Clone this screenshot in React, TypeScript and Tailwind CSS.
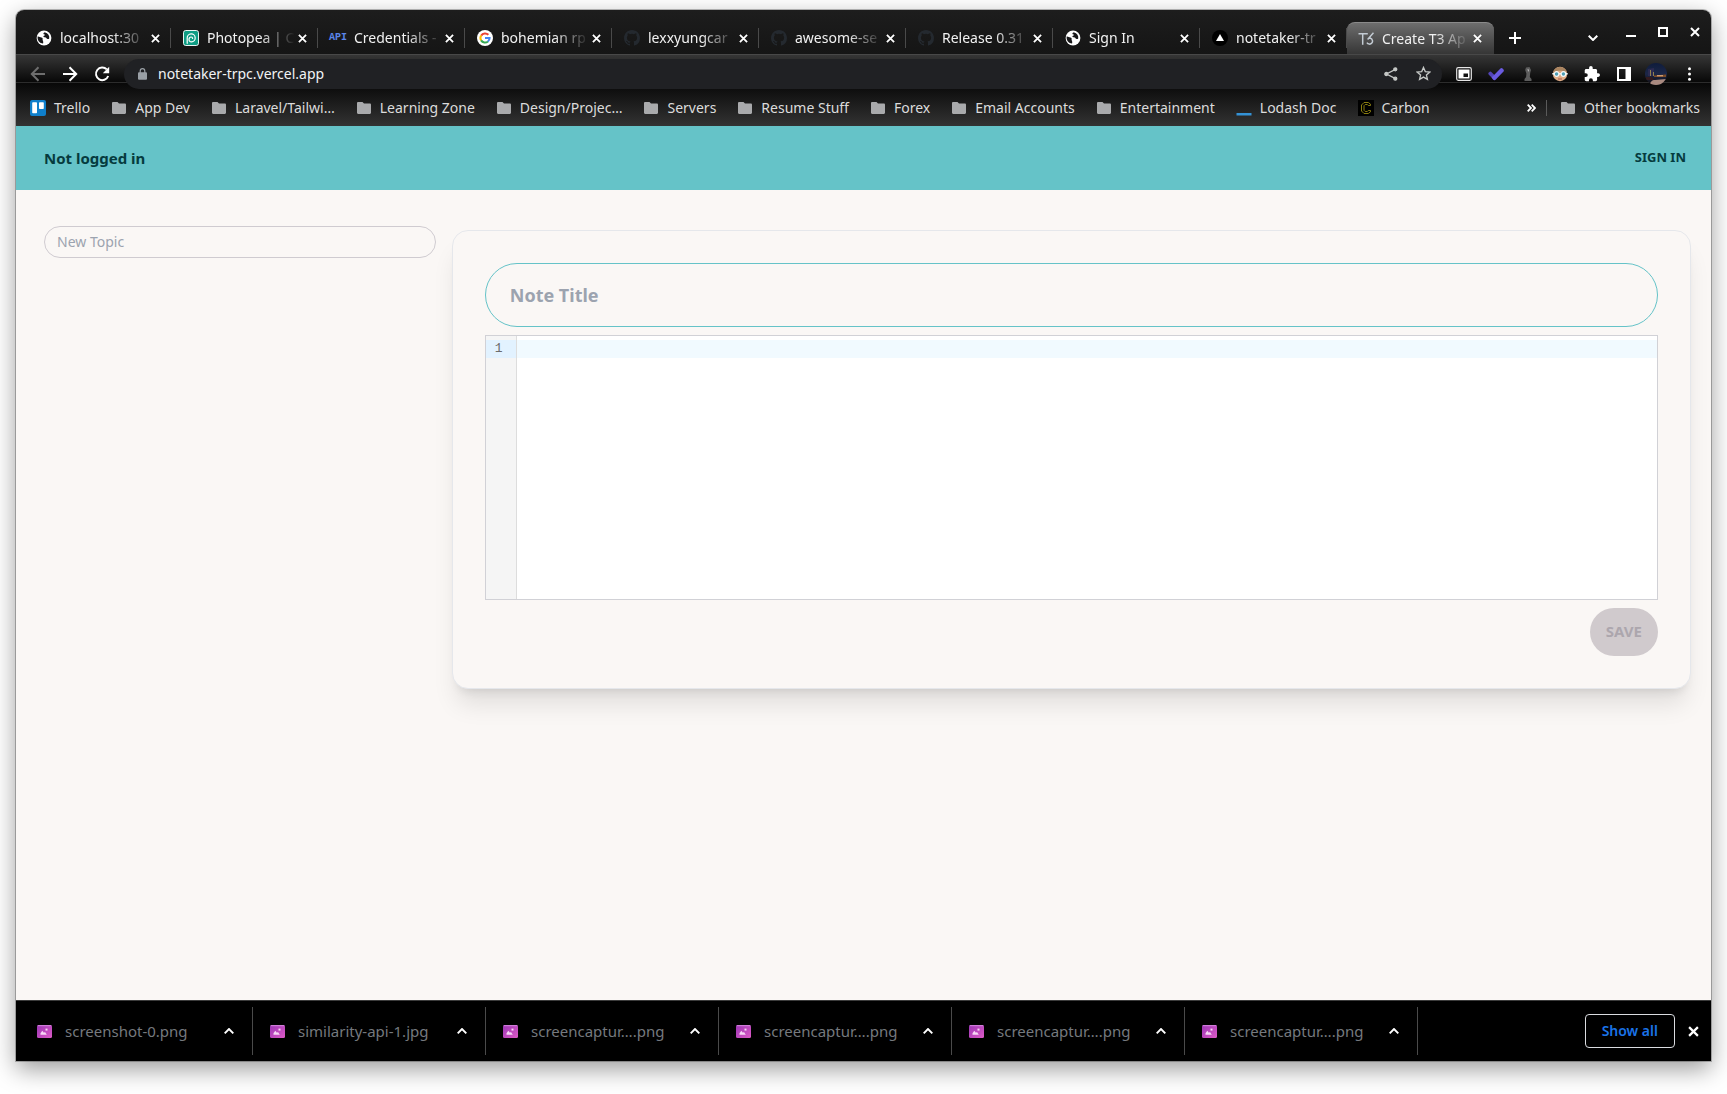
import type { ReactNode } from "react";

const sans = "font-['Noto_Sans',sans-serif]";

/* ---------- icons ---------- */

function Globe() {
  return (
    <svg className="size-4 shrink-0" viewBox="0 0 16 16" aria-hidden="true">
      <circle cx="8" cy="8" r="7.4" fill="#fff" />
      <path d="M1.6 6.6C3 6.2 4 7.4 5.4 7.6c1.200.2 1.500 1 1.200 1.900-.2.7.4 1 .5 1.700.1.9.3 1.600-.1 2.400C4 13.200 1.700 10.800 1.600 8z" fill="#18181a" />
      <path d="M8.700 2.200c-.9.5-1.500 1.200-1.200 1.900.3.5 1.200.2 1.300.9.100.8-1.500.7-1.500 1.500 0 .6.9.8 1.700.8 1 0 1.300 1 2 1.400.8.4 1.900.3 2.200-.3.5-2.600-1-5.300-4.500-6.200z" fill="#18181a" />
    </svg>
  );
}

function Photopea() {
  return (
    <svg className="size-4 shrink-0" viewBox="0 0 16 16" fill="none" aria-hidden="true">
      <rect x=".5" y=".5" width="15" height="15" rx="2.200" fill="#0f9d84" stroke="#e8f5f2" />
      <path d="M4.200 13.300V8a4 4 0 1 1 4.300 3.900c-1.800 0-2.600-1.300-2.500-2.700.1-1.300 1-2.200 2.100-2.200.9 0 1.500.6 1.500 1.400" stroke="#fff" strokeWidth="1.200" strokeLinecap="round" />
    </svg>
  );
}

function ApiMark() {
  return <span className="flex w-4 shrink-0 justify-center font-['Liberation_Mono',monospace] text-[10px] leading-4 font-bold text-[#5b86ea]">API</span>;
}

function Google() {
  return (
    <svg className="size-4 shrink-0" viewBox="0 0 16 16" fill="none" strokeWidth="2" aria-hidden="true">
      <circle cx="8" cy="8" r="8" fill="#fff" />
      <path d="M4.200 5.600A4.600 4.600 0 0 1 11.400 4.800" stroke="#ea4335" />
      <path d="M4.200 10.500a4.600 4.600 0 0 1 0-5" stroke="#fbbc05" />
      <path d="M11 11.400a4.600 4.600 0 0 1-6.900-1" stroke="#34a853" />
      <path d="M8 8h4.600a4.600 4.600 0 0 1-1.700 3.500" stroke="#4285f4" />
    </svg>
  );
}

function Github() {
  return (
    <svg className="size-4 shrink-0" viewBox="0 0 16 16" fill="#24292f" aria-hidden="true">
      <path d="M8 0C3.580 0 0 3.580 0 8c0 3.540 2.290 6.530 5.470 7.590.4.070.55-.17.55-.38 0-.19-.01-.82-.01-1.490-2.010.37-2.530-.49-2.690-.94-.09-.23-.48-.94-.82-1.130-.28-.15-.68-.52-.01-.53.630-.01 1.080.58 1.230.82.720 1.210 1.870.87 2.330.66.070-.52.280-.87.510-1.070-1.780-.2-3.640-.89-3.640-3.950 0-.87.310-1.590.82-2.150-.08-.2-.36-1.020.08-2.120 0 0 .67-.21 2.200.82a7.600 7.600 0 0 1 4 0c1.530-1.040 2.200-.82 2.200-.82.440 1.100.160 1.920.080 2.120.51.560.82 1.270.82 2.150 0 3.070-1.870 3.750-3.650 3.950.290.250.54.730.54 1.480 0 1.070-.01 1.930-.01 2.200 0 .21.150.46.55.38A8 8 0 0 0 16 8c0-4.420-3.580-8-8-8z" />
    </svg>
  );
}

function Vercel() {
  return (
    <svg className="size-4 shrink-0" viewBox="0 0 16 16" aria-hidden="true">
      <circle cx="8" cy="8" r="8" fill="#000" />
      <path d="M8 4l4 7H4z" fill="#fff" />
    </svg>
  );
}

function T3() {
  return (
    <svg className="size-4 shrink-0" viewBox="0 0 16 16" fill="none" stroke="#c3cbd3" strokeWidth="1.500" aria-hidden="true">
      <path d="M.5 2.800h9.300M4.700 2.800v11" />
      <path d="M15.500 1.800 9.600 8.500M10.500 7.300h2a3 3 0 1 1-3.600 4.300" />
    </svg>
  );
}

function Folder() {
  return (
    <svg className="mx-px w-[14px] shrink-0" viewBox="0 0 14 12" aria-hidden="true">
      <path d="M1.200 0h4.300L7 1.600h5.800c.7 0 1.200.5 1.200 1.200v8c0 .7-.5 1.200-1.200 1.200H1.200C.5 12 0 11.500 0 10.800V1.200C0 .5.500 0 1.200 0z" fill="#a9aaac" />
    </svg>
  );
}

function Trello() {
  return (
    <svg className="size-4 shrink-0" viewBox="0 0 16 16" aria-hidden="true">
      <rect width="16" height="16" rx="2" fill="#0f7fcb" />
      <rect x="2.200" y="2.200" width="4.800" height="11" rx=".8" fill="#fff" />
      <rect x="9" y="2.200" width="4.800" height="6.800" rx=".8" fill="#fff" />
    </svg>
  );
}

function Lodash() {
  return (
    <svg className="size-4 shrink-0" viewBox="0 0 16 16" aria-hidden="true">
      <path d="M.5 13h15v2.500H.5z" fill="#3492d6" />
    </svg>
  );
}

function Carbon() {
  return (
    <svg className="size-4 shrink-0" viewBox="0 0 16 16" fill="none" aria-hidden="true">
      <path d="M0 0h16v16H0z" fill="#000" />
      <path d="M12.500 5.500V4.200L10.300 2.500H6L3.500 5v6L6 13.500h4.300l2.200-1.700v-1.300h-2.200l-1 1H7.200L6 10.300V5.700l1.200-1.200h2.100l1 1z" stroke="#8a7d10" strokeWidth="1" />
    </svg>
  );
}

function Cross({ size = "size-[9px]" }: { size?: string }) {
  return (
    <svg className={size} viewBox="0 0 10 10" stroke="#fff" strokeWidth="2" aria-hidden="true">
      <path d="M1 1l8 8M9 1L1 9" />
    </svg>
  );
}

function ImageFile() {
  return (
    <svg className="w-[15px] shrink-0" viewBox="0 0 15 13" aria-hidden="true">
      <defs>
        <linearGradient id="file" x1="0" y1="0" x2="1" y2="1">
          <stop offset="0" stopColor="#9b35b5" />
          <stop offset="1" stopColor="#dd5bc6" />
        </linearGradient>
      </defs>
      <rect width="15" height="13" rx="1.500" fill="url(#file)" />
      <path d="M.7.700h13.600" stroke="#d88be0" />
      <path d="M3.500 9.700V8.300l1.800-2.500 1.600 2L8 7l1.800 2.700z" fill="#f7d6f5" />
      <path d="M8.500 3.600h2v2h-2z" fill="#f7d6f5" />
    </svg>
  );
}

/* ---------- browser chrome ---------- */

type TabData = { title: string; icon: ReactNode; active?: boolean };

const tabs: TabData[] = [
  { title: "localhost:30", icon: <Globe /> },
  { title: "Photopea | C", icon: <Photopea /> },
  { title: "Credentials -", icon: <ApiMark /> },
  { title: "bohemian rp", icon: <Google /> },
  { title: "lexxyungcar", icon: <Github /> },
  { title: "awesome-se", icon: <Github /> },
  { title: "Release 0.31", icon: <Github /> },
  { title: "Sign In", icon: <Globe /> },
  { title: "notetaker-tr", icon: <Vercel /> },
  { title: "Create T3 Ap", icon: <T3 />, active: true },
];

function Tab({ title, icon, active }: TabData) {
  return (
    <div
      className={
        active
          ? "flex h-8 w-[147px] min-w-0 items-center rounded-t-lg border-t border-[#8a8a8a] bg-linear-to-b from-[#6e6e6e] to-[#363636] pr-3 pl-[11px]"
          : "flex h-8 w-[147px] min-w-0 items-center pl-3"
      }
    >
      <button className="flex min-w-0 flex-1 items-center gap-2 text-left">
        {icon}
        <span className="w-[88px] mask-r-from-60% mask-r-to-100% text-[14px] leading-5 whitespace-nowrap text-[#f1f1f1]">
          {title}
        </span>
      </button>
      <button aria-label={`Close ${title}`} className={active ? "" : "mr-[10px]"}>
        <Cross />
      </button>
      {!active && <span className="h-5 w-px bg-[#4a4a4a]" />}
    </div>
  );
}

function TabStrip() {
  return (
    <div className="flex h-11 items-start bg-linear-to-b from-[#1d1d1d] to-[#151515] pl-2">
      <div className="flex min-w-0 pt-3">
        {tabs.map((t) => (
          <Tab key={t.title} {...t} />
        ))}
      </div>
      <button aria-label="New tab" className="mt-[14px] ml-[7px] flex size-7 items-center justify-center">
        <svg className="size-3" viewBox="0 0 12 12" stroke="#fff" strokeWidth="2" aria-hidden="true">
          <path d="M6 0v12M0 6h12" />
        </svg>
      </button>
      <button aria-label="Search tabs" className="mt-[14px] mr-[19px] ml-auto flex size-7 items-center justify-center">
        <svg className="w-[10px]" viewBox="0 0 10 6" fill="none" stroke="#fff" strokeWidth="2" aria-hidden="true">
          <path d="M.7.700 5 5 9.300.700" />
        </svg>
      </button>
      <div className="flex items-center gap-[22px] pt-4 pr-[11px]">
        <button aria-label="Minimize" className="flex h-3 items-end pb-px">
          <span className="h-[2px] w-[10px] bg-white" />
        </button>
        <button aria-label="Maximize" className="size-[10px] border-2 border-white" />
        <button aria-label="Close window">
          <Cross size="size-[10px]" />
        </button>
      </div>
    </div>
  );
}

function Toolbar() {
  return (
    <div className="flex h-[38px] items-center pr-[14px] pb-px pl-[14px]">
      <div className="flex items-center gap-4">
        <button aria-label="Back">
          <svg className="size-4" viewBox="0 0 16 16" fill="none" stroke="#6e6e6e" strokeWidth="2" aria-hidden="true">
            <path d="M15 8H2M8.500 1.300 1.800 8l6.700 6.700" />
          </svg>
        </button>
        <button aria-label="Forward">
          <svg className="size-4" viewBox="0 0 16 16" fill="none" stroke="#fff" strokeWidth="2" aria-hidden="true">
            <path d="M1 8h13M7.500 1.300 14.200 8l-6.700 6.700" />
          </svg>
        </button>
        <button aria-label="Reload">
          <svg className="size-4" viewBox="0 0 16 16" aria-hidden="true">
            <path d="M12.800 3.400A6.300 6.300 0 1 0 14.200 10" fill="none" stroke="#fff" strokeWidth="2" />
            <path d="M15.200.8v6.400H8.800z" fill="#fff" />
          </svg>
        </button>
      </div>
      <div className="ml-[14px] flex h-[30px] min-w-0 flex-1 items-center rounded-full bg-[#202124] pr-[11px] pl-[14px]">
        <svg className="w-[9px] shrink-0" viewBox="0 0 9 12" aria-hidden="true">
          <path d="M2.200 5V3a2.300 2.300 0 0 1 4.600 0v2" fill="none" stroke="#9aa0a6" strokeWidth="1.200" />
          <rect y="4.200" width="9" height="7.500" rx="1" fill="#9aa0a6" />
        </svg>
        <input
          aria-label="Address"
          defaultValue="notetaker-trpc.vercel.app"
          className="ml-[11px] min-w-0 flex-1 bg-transparent text-[14px] text-[#f1f3f4] outline-none"
        />
        <button aria-label="Share" className="mr-[18px]">
          <svg className="size-[14px]" viewBox="0 0 14 14" stroke="#c4c7c5" strokeWidth="1.300" fill="#c4c7c5" aria-hidden="true">
            <path d="M11.500 2.300 2.500 7l9 4.700" fill="none" />
            <circle cx="11.300" cy="2.300" r="1.500" />
            <circle cx="2.300" cy="7" r="1.500" />
            <circle cx="11.300" cy="11.700" r="1.500" />
          </svg>
        </button>
        <button aria-label="Bookmark this page">
          <svg className="size-[15px]" viewBox="0 0 16 16" fill="none" stroke="#c4c7c5" strokeWidth="1.400" aria-hidden="true">
            <path d="M8 1.500l1.900 4.500 4.900.4-3.700 3.200 1.100 4.700L8 11.800l-4.200 2.500 1.100-4.700L1.200 6.400l4.900-.4z" />
          </svg>
        </button>
      </div>
      <div className="ml-[14px] flex items-center gap-4">
        <button aria-label="Picture in picture">
          <svg className="size-4" viewBox="0 0 16 16" aria-hidden="true">
            <rect x=".7" y="1.700" width="14.600" height="12.600" rx="1.500" fill="#111" stroke="#e6e6e6" strokeWidth="1.200" />
            <path d="M2.500 3.500h11v9h-11z" fill="#fff" />
            <path d="M7.500 7.500H12V11H7.500z" fill="#111" />
          </svg>
        </button>
        <button aria-label="Tasks extension">
          <svg className="size-4" viewBox="0 0 16 16" aria-hidden="true">
            <path d="M1.200 6.200a1.700 1.700 0 0 1 2.400 0L9 11.500 6.300 14.200.8 8.700a1.700 1.700 0 0 1 .4-2.500z" fill="#5244b8" />
            <path d="M3.600 11.400 12.200 2.800a1.800 1.800 0 0 1 2.600 0l.5.500a1.800 1.800 0 0 1 0 2.500L7.800 13.500a2 2 0 0 1-2.800 0z" fill="#6a5be0" />
          </svg>
        </button>
        <button aria-label="Chess extension">
          <svg className="size-4" viewBox="0 0 16 16" aria-hidden="true">
            <path d="M6 1.500 9.500 1 11 4l-.8 3-.4 4 1.700 2v2h-7v-2l1.600-2 .3-3.500L5.200 4z" fill="#5d5d5d" />
            <path d="M7.500 3l1.500.8L8.200 6z" fill="#c9c9c9" />
          </svg>
        </button>
        <button aria-label="Reader extension">
          <svg className="size-4" viewBox="0 0 16 16" aria-hidden="true">
            <circle cx="8" cy="8" r="7.200" fill="#e0ac86" />
            <path d="M1 6.500A7.200 7.200 0 0 1 15 6.500C12 4 4 4 1 6.500z" fill="#a98460" />
            <path d="M.3 7h15.400v1.500H.3z" fill="#eef6f8" />
            <circle cx="4.600" cy="8" r="2.300" fill="#4f9fb5" stroke="#f4f8f9" strokeWidth="1.200" />
            <circle cx="11.400" cy="8" r="2.300" fill="#4f9fb5" stroke="#f4f8f9" strokeWidth="1.200" />
            <path d="M6 13h4" stroke="#a8574c" />
          </svg>
        </button>
        <button aria-label="Extensions">
          <svg className="size-4" viewBox="1 1 22 22" fill="#fff" aria-hidden="true">
            <path d="M20.500 11H19V7c0-1.100-.9-2-2-2h-4V3.500a2.500 2.500 0 0 0-5 0V5H4c-1.100 0-2 .9-2 2v3.800h1.500a2.700 2.700 0 0 1 0 5.400H2V20c0 1.100.9 2 2 2h3.800v-1.500a2.700 2.700 0 0 1 5.400 0V22H17c1.100 0 2-.9 2-2v-4h1.500a2.500 2.500 0 0 0 0-5z" />
          </svg>
        </button>
        <button aria-label="Side panel">
          <svg className="size-4" viewBox="0 0 16 16" aria-hidden="true">
            <path d="M1 1h14v14H1zM3 3v10h6.500V3z" fill="#fff" fillRule="evenodd" />
          </svg>
        </button>
        <button aria-label="Profile" className="-ml-[3px]">
          <svg className="size-[22px]" viewBox="0 0 22 22" aria-hidden="true">
            <defs>
              <clipPath id="avatar">
                <circle cx="11" cy="11" r="11" />
              </clipPath>
              <linearGradient id="sky" x1="0" y1="0" x2="0" y2="1">
                <stop offset="0" stopColor="#0f1c3c" />
                <stop offset=".5" stopColor="#1c2748" />
                <stop offset="1" stopColor="#120d10" />
              </linearGradient>
            </defs>
            <g clipPath="url(#avatar)">
              <path d="M0 0h22v22H0z" fill="url(#sky)" />
              <path d="M3 6 9 5v8H3z" fill="#2b2a50" />
              <path d="M5 7h1v6H5zM8 9h1v4H8z" fill="#8f8050" />
              <path d="M9 12.500l12-1v2.500H9z" fill="#7c4c28" />
              <path d="M12 12.200h6v1h-6z" fill="#e7b48a" />
              <path d="M0 14h7l2 3H1z" fill="#331a1e" />
              <path d="M5 22c0-3 2-5 5-5l11-1v6z" fill="#a98a80" />
            </g>
          </svg>
        </button>
        <button aria-label="Menu" className="-ml-[2px] flex w-4 justify-center">
          <svg className="h-[14px] w-[3px]" viewBox="0 0 3 14" fill="#fff" aria-hidden="true">
            <circle cx="1.500" cy="1.700" r="1.500" />
            <circle cx="1.500" cy="7" r="1.500" />
            <circle cx="1.500" cy="12.300" r="1.500" />
          </svg>
        </button>
      </div>
    </div>
  );
}

const bookmarks: { label: string; icon?: ReactNode }[] = [
  { label: "Trello", icon: <Trello /> },
  { label: "App Dev" },
  { label: "Laravel/Tailwi…" },
  { label: "Learning Zone" },
  { label: "Design/Projec…" },
  { label: "Servers" },
  { label: "Resume Stuff" },
  { label: "Forex" },
  { label: "Email Accounts" },
  { label: "Entertainment" },
  { label: "Lodash Doc", icon: <Lodash /> },
  { label: "Carbon", icon: <Carbon /> },
];

function Bookmark({ label, icon }: { label: string; icon?: ReactNode }) {
  return (
    <a href="#" className="flex items-center gap-2 text-[14px] leading-5 whitespace-nowrap text-[#dcdcdc]">
      {icon ?? <Folder />}
      {label}
    </a>
  );
}

function BookmarksBar() {
  return (
    <div className="flex h-[33px] items-center pr-[11px] pb-[4px] pl-[14px]">
      <nav aria-label="Bookmarks" className="flex min-w-0 gap-[21px] overflow-hidden">
        {bookmarks.map((b) => (
          <Bookmark key={b.label} {...b} />
        ))}
      </nav>
      <button aria-label="More bookmarks" className="mr-[10px] ml-auto">
        <svg className="w-[9px]" viewBox="0 0 9 8" fill="none" stroke="#fff" strokeWidth="1.800" aria-hidden="true">
          <path d="M.7.700 4 4 .7 7.300M4.700.700 8 4 4.700 7.300" />
        </svg>
      </button>
      <span className="mr-[13px] h-4 w-px bg-[#5a5a5a]" />
      <Bookmark label="Other bookmarks" />
    </div>
  );
}

/* ---------- page ---------- */

function Page() {
  return (
    <div className="flex-1 bg-[#faf7f5]">
      <header className="flex h-16 items-center justify-between bg-[#65c3c8] pr-[25px] pl-7 font-bold text-[#053b3e]">
        <span className="text-[15px]">Not logged in</span>
        <button className="text-[13px]">SIGN IN</button>
      </header>
      <main className="mt-5 ml-5 grid grid-cols-4 gap-2 pr-5">
        <div className="px-2 pt-4">
          <input
            aria-label="New Topic"
            placeholder="New Topic"
            className="block h-8 w-full rounded-[16px] border border-[#cfcbd0] bg-transparent px-3 pb-[2px] text-[14px] text-[#291334] outline-none placeholder:text-[#9ca3af]"
          />
        </div>
        <section className="col-span-3 mt-5 rounded-[16px] border border-[#e5e7eb] bg-[#faf7f5] p-8 shadow-[0_20px_25px_-5px_rgba(0,0,0,0.1),0_8px_10px_-6px_rgba(0,0,0,0.1)]">
          <input
            aria-label="Note Title"
            placeholder="Note Title"
            className="block h-16 w-full rounded-[32px] border border-[#65c3c8] bg-transparent px-6 text-lg font-bold text-[#291334] outline-none placeholder:text-[#9ca3af]"
          />
          <div className="mt-2 flex h-[265px] border border-[#d1d1d6] bg-white font-['Liberation_Mono',monospace] text-[13px] leading-[18px]">
            <div className="w-[31px] border-r border-[#dddddd] bg-[#f5f5f5] pt-1 text-[#6c6c6c]">
              <div className="bg-[#e2f2ff] pl-[9px]">1</div>
            </div>
            <div className="flex-1 pt-1">
              <textarea aria-label="Note body" rows={1} className="block h-[18px] w-full resize-none bg-[#f1faff] px-1 outline-none" />
            </div>
          </div>
          <div className="mt-2 flex justify-end">
            <button disabled className="h-12 rounded-[24px] bg-[#d0cacd] px-4 pb-[2px] text-[15px] font-bold text-[#aca6ad]">
              SAVE
            </button>
          </div>
        </section>
      </main>
    </div>
  );
}

/* ---------- downloads ---------- */

const downloads = [
  "screenshot-0.png",
  "similarity-api-1.jpg",
  "screencaptur….png",
  "screencaptur….png",
  "screencaptur….png",
  "screencaptur….png",
];

function DownloadShelf() {
  return (
    <footer className="flex h-[61px] items-center border-t border-[#3c3c3c] bg-black pr-3 pl-1">
      {downloads.map((name, i) => (
        <div key={i} className="flex h-12 w-[233px] min-w-0 items-center border-r border-[#4a4a4a] pr-[18px] pl-[17px]">
          <button className="flex min-w-0 flex-1 items-center gap-[13px] text-left text-[15px] leading-5 whitespace-nowrap text-[#75797e]">
            <ImageFile />
            {name}
          </button>
          <button aria-label={`Options for ${name}`}>
            <svg className="w-[10px]" viewBox="0 0 10 6" fill="none" stroke="#fff" strokeWidth="1.900" aria-hidden="true">
              <path d="M.7 5.300 5 1l4.300 4.300" />
            </svg>
          </button>
        </div>
      ))}
      <button className="mr-[13px] ml-auto h-[34px] rounded border border-[#dadce0] px-4 pb-[2px] text-[14px] font-semibold whitespace-nowrap text-[#1a73e8]">
        Show all
      </button>
      <button aria-label="Close downloads">
        <Cross size="size-[11px]" />
      </button>
    </footer>
  );
}

export default function App() {
  return (
    <div className={`${sans} flex min-h-screen bg-white px-4 pt-[10px] pb-[33px]`}>
      <div className="flex min-w-0 flex-1 flex-col overflow-hidden rounded-t-lg shadow-[0_0_0_1px_rgba(0,0,0,0.25),0_8px_24px_rgba(0,0,0,0.4)]">
        <TabStrip />
        <div className="border-t border-[#484848] bg-[linear-gradient(#363636_0,#080808_27px,#2c2c2c_27px,#2c2c2c_28px,#080808_28px,#333333_71px)]">
          <Toolbar />
          <BookmarksBar />
        </div>
        <Page />
        <DownloadShelf />
      </div>
    </div>
  );
}
